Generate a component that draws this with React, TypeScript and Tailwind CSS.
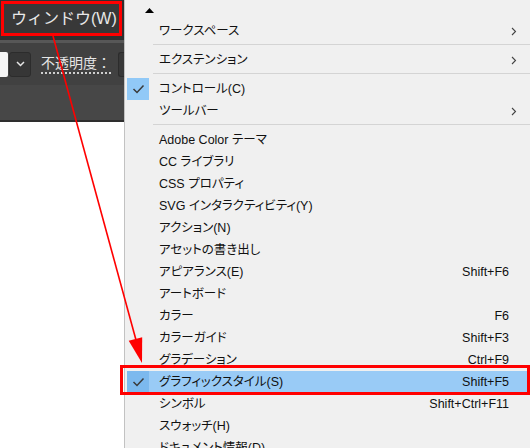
import React from "react";

type Item = {
  label?: string;
  shortcut?: string;
  sub?: boolean;
  checked?: boolean;
  active?: boolean;
  sep?: boolean;
};

const items: Item[] = [
  { label: "ワークスペース", sub: true },
  { sep: true },
  { label: "エクステンション", sub: true },
  { sep: true },
  { label: "コントロール(C)", checked: true },
  { label: "ツールバー", sub: true },
  { sep: true },
  { label: "Adobe Color テーマ" },
  { label: "CC ライブラリ" },
  { label: "CSS プロパティ" },
  { label: "SVG インタラクティビティ(Y)" },
  { label: "アクション(N)" },
  { label: "アセットの書き出し" },
  { label: "アピアランス(E)", shortcut: "Shift+F6" },
  { label: "アートボード" },
  { label: "カラー", shortcut: "F6" },
  { label: "カラーガイド", shortcut: "Shift+F3" },
  { label: "グラデーション", shortcut: "Ctrl+F9" },
  { label: "グラフィックスタイル(S)", shortcut: "Shift+F5", checked: true, active: true },
  { label: "シンボル", shortcut: "Shift+Ctrl+F11" },
  { label: "スウォッチ(H)" },
  { label: "ドキュメント情報(D)" },
];

function Check() {
  return (
    <svg width="13" height="10" viewBox="0 0 13 10">
      <polyline points="1.5,5 5,8.5 11.5,1.5" fill="none" stroke="#3a3a3a" strokeWidth="1.5" />
    </svg>
  );
}

function Chevron() {
  return (
    <svg width="6" height="9" viewBox="0 0 6 9">
      <polyline points="1,1 4.5,4.5 1,8" fill="none" stroke="#444" strokeWidth="1.1" />
    </svg>
  );
}

function MenuRow({ item }: { item: Item }) {
  if (item.sep) {
    return (
      <div className="h-[7px] pt-[2px] ml-[26px] mr-[-3px]">
        <div className="h-px bg-[#d4d4d4]" />
      </div>
    );
  }
  return (
    <div className={`relative flex h-[22px] items-center ${item.active ? "bg-[#99cbf6]" : ""}`}>
      <div
        className={`flex h-[22px] w-[22px] shrink-0 items-center justify-center ${
          item.checked ? (item.active ? "bg-[#7cb9ee]" : "bg-[#91c9f7]") : ""
        }`}
      >
        {item.checked && <Check />}
      </div>
      <span className="ml-[10px] flex-1 whitespace-nowrap text-[12.5px] text-[#111] [font-feature-settings:'palt']">
        {item.label}
      </span>
      {item.shortcut && (
        <span className="mr-[18px] whitespace-nowrap text-[12.5px] text-[#111]">{item.shortcut}</span>
      )}
      {item.sub && (
        <span className="mr-[10px] flex items-center">
          <Chevron />
        </span>
      )}
    </div>
  );
}

export default function App() {
  return (
    <div className="relative flex h-[448px] w-[530px] overflow-hidden bg-white font-['Liberation_Sans','Noto_Sans_CJK_JP',sans-serif]">
      {/* app chrome on the left */}
      <div className="flex w-[124px] shrink-0 flex-col">
        <div className="h-[40px] bg-[#2f2f2f] pl-[1px] pt-[1px]">
          <div className="flex h-[35px] w-[121px] items-center whitespace-nowrap border-[3px] border-[#f00] bg-[#383838] pl-[7px] text-[16px] text-[#e8e8e8]">
            ウィンドウ(W)
          </div>
        </div>
        <div className="h-[3px] bg-[#575757]" />
        <div className="flex h-[42px] items-center overflow-hidden bg-[#414141]">
          <div className="h-[25px] w-[8px] shrink-0 rounded-r-[2px] bg-[#f4f4f4]" />
          <div className="ml-px flex h-[25px] w-[22px] shrink-0 items-center justify-center rounded-[3px] border border-[#2c2c2c] bg-[#363636]">
            <svg width="9" height="6" viewBox="0 0 9 6">
              <polyline points="1,1 4.5,4.5 8,1" fill="none" stroke="#e6e6e6" strokeWidth="1.5" />
            </svg>
          </div>
          <span className="ml-[10px] shrink-0 whitespace-nowrap border-b-2 border-dotted border-[#cfcfcf] text-[14px] leading-[18px] text-[#e6e6e6]">
            不透明度：
          </span>
          <div className="ml-auto h-[25px] w-[6px] shrink-0 rounded-l-[3px] border border-r-0 border-[#2c2c2c] bg-[#383838]" />
        </div>
        <div className="h-[35px] bg-[#474747]" />
        <div className="h-[2px] bg-[#2e2e2e]" />
        <div className="flex-1 bg-white" />
      </div>

      {/* window menu */}
      <div className="flex-1 border-l border-[#c2c2c2] bg-[#f0f0f0] pl-[2px] pr-[3px]">
        <div className="relative h-[20px]">
          <svg className="absolute left-[18px] top-[8px]" width="9" height="5" viewBox="0 0 9 5">
            <polygon points="0,5 4.5,0 9,5" fill="#000" />
          </svg>
        </div>
        {items.map((item, i) => (
          <MenuRow key={i} item={item} />
        ))}
      </div>

      {/* annotation: red highlight box */}
      <div className="pointer-events-none absolute left-[120px] top-[365px] h-[30px] w-[410px] border-[3px] border-[#f00]" />

      {/* annotation: red arrow */}
      <svg className="pointer-events-none absolute left-0 top-0" width="530" height="448" viewBox="0 0 530 448">
        <line x1="53" y1="36" x2="136" y2="340" stroke="#f00" strokeWidth="1.6" />
        <polygon points="142,363 128.7,340.8 142.2,337.2" fill="#f00" />
      </svg>
    </div>
  );
}
